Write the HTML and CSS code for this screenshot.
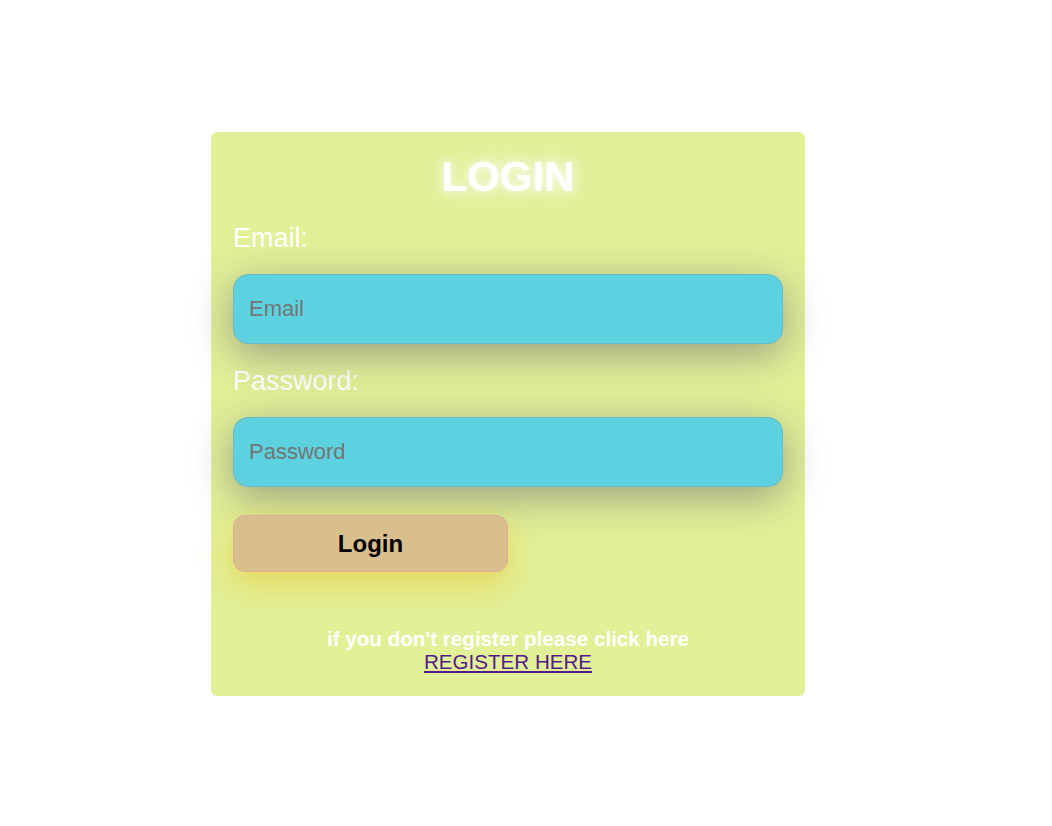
FILE: index.html
```html
<!DOCTYPE html>
<html lang="en">
<head>
<meta charset="utf-8">
<title>Login</title>
<link rel="stylesheet" href="styles.css">
</head>
<body>
  <form class="card">
    <h1 class="title">LOGIN</h1>
    <label class="label label-email" for="email">Email:</label>
    <input class="field" id="email" type="email" placeholder="Email">
    <label class="label label-pass" for="password">Password:</label>
    <input class="field field-pass" id="password" type="password" placeholder="Password">
    <button class="btn" type="button">Login</button>
    <p class="note">if you don't register please click here<br><a class="link" href="#register">REGISTER HERE</a></p>
  </form>
</body>
</html>
```

FILE: styles.css
```css
html, body {
  margin: 0;
  padding: 0;
  background: #ffffff;
}

body {
  font-family: "Liberation Sans", Arial, sans-serif;
}

.card {
  box-sizing: content-box;
  width: 550px;
  margin: 132px 0 0 211px;
  padding: 21px 22px 23px;
  background: #e2f097;
  border-radius: 6px;
  display: flex;
  flex-direction: column;
}

.title {
  margin: 0;
  font-size: 42px;
  line-height: 48px;
  font-weight: bold;
  color: #ffffff;
  text-align: center;
  text-shadow: 0 0 10px rgba(255, 255, 255, 0.9), 0 0 28px rgba(255, 255, 255, 0.7);
}

.label {
  display: block;
  font-size: 27px;
  line-height: 34px;
  color: #ffffff;
}

.label-email {
  margin-top: 20px;
}

.label-pass {
  margin-top: 20px;
}

.field {
  position: relative;
  box-sizing: border-box;
  width: 100%;
  height: 70px;
  margin: 19px 0 0;
  padding: 0 15px;
  background: #5cd2e0;
  border: 1px solid #6cb8c6;
  border-radius: 15px;
  font-family: "Liberation Sans", Arial, sans-serif;
  font-size: 22px;
  color: #333333;
  outline: none;
  box-shadow: 0 10px 40px rgba(30, 30, 90, 0.38);
}

.field-pass {
  margin-top: 19px;
}

.field::placeholder {
  color: #757575;
  opacity: 1;
}

.btn {
  position: relative;
  align-self: flex-start;
  box-sizing: border-box;
  width: 275px;
  height: 57px;
  margin-top: 28px;
  padding: 0;
  background: #d9bf8e;
  border: 1px solid #e2a994;
  border-radius: 12px;
  font-family: "Liberation Sans", Arial, sans-serif;
  font-size: 24px;
  font-weight: bold;
  color: #000000;
  box-shadow: 0 12px 32px rgba(235, 185, 20, 0.45);
  cursor: pointer;
}

.note {
  margin: 55px 0 0;
  font-size: 20.6px;
  line-height: 23px;
  font-weight: bold;
  color: #ffffff;
  text-align: center;
}

.link {
  font-weight: normal;
  color: #551a8b;
  text-decoration: underline;
}
```
